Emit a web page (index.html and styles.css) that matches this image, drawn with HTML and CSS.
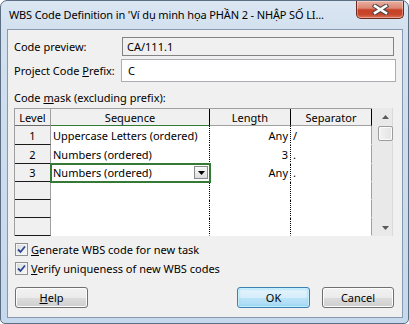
FILE: index.html
```html
<!DOCTYPE html>
<html>
<head>
<meta charset="utf-8">
<link rel="stylesheet" href="styles.css">
</head>
<body>
<div class="window">
  <div class="titlebar">
    <span class="title">WBS Code Definition in 'Ví dụ minh họa PHẦN 2 - NHẬP SỐ LI...</span>
    <div class="close">
      <svg width="17" height="11" viewBox="0 0 17 11">
        <path d="M3 2 L14 9 M14 2 L3 9" stroke="#474747" stroke-width="4.6" stroke-linecap="square" fill="none"/>
        <path d="M3 2 L14 9 M14 2 L3 9" stroke="#ffffff" stroke-width="2.6" stroke-linecap="square" fill="none"/>
      </svg>
    </div>
  </div>
  <div class="client">
    <div class="field-row preview-row">
      <span class="label lbl-preview">Code preview:</span>
      <div class="box readonly">CA/111.1</div>
    </div>
    <div class="field-row prefix-row">
      <span class="label lbl-prefix">Project Code <u>P</u>refix:</span>
      <div class="box input">C</div>
    </div>
    <div class="mask-label">Code <u>m</u>ask (excluding prefix):</div>
    <div class="grid">
      <div class="table">
        <div class="hc level-h">Level</div>
        <div class="hc seq-h">Sequence</div>
        <div class="hc len-h">Length</div>
        <div class="hc sep-h">Separator</div>

        <div class="lv">1</div>
        <div class="c seq">Uppercase Letters (ordered)</div>
        <div class="c len">Any</div>
        <div class="c sep">/</div>

        <div class="lv">2</div>
        <div class="c seq">Numbers (ordered)</div>
        <div class="c len">3</div>
        <div class="c sep">.</div>

        <div class="lv">3</div>
        <div class="c seq active"><span>Numbers (ordered)</span><span class="dd"><svg width="7" height="4" viewBox="0 0 7 4"><path d="M0 0 H7 L3.5 4 Z" fill="#000"/></svg></span></div>
        <div class="c len">Any</div>
        <div class="c sep">.</div>

        <div class="lv"></div>
        <div class="c seq"></div>
        <div class="c len"></div>
        <div class="c sep"></div>

        <div class="lv"></div>
        <div class="c seq"></div>
        <div class="c len"></div>
        <div class="c sep"></div>

        <div class="lv"></div>
        <div class="c seq"></div>
        <div class="c len"></div>
        <div class="c sep"></div>
      </div>
      <div class="scrollbar">
        <div class="sb-btn"><svg width="7" height="4" viewBox="0 0 7 4"><path d="M0 4 H7 L3.5 0 Z" fill="#5a5a5a"/></svg></div>
        <div class="sb-thumb"></div>
        <div class="sb-track"></div>
        <div class="sb-btn"><svg width="7" height="4" viewBox="0 0 7 4"><path d="M0 0 H7 L3.5 4 Z" fill="#5a5a5a"/></svg></div>
      </div>
    </div>
    <div class="checks">
      <div class="check-row">
        <span class="cb"><svg width="9" height="9" viewBox="0 0 9 9"><path d="M1 4.5 L3.5 7 L8 1.5" stroke="#2b4691" stroke-width="1.8" fill="none"/></svg></span>
        <span class="ctext"><u>G</u>enerate WBS code for new task</span>
      </div>
      <div class="check-row">
        <span class="cb"><svg width="9" height="9" viewBox="0 0 9 9"><path d="M1 4.5 L3.5 7 L8 1.5" stroke="#2b4691" stroke-width="1.8" fill="none"/></svg></span>
        <span class="ctext"><u>V</u>erify uniqueness of new WBS codes</span>
      </div>
    </div>
    <div class="buttons">
      <div class="btn help"><u>H</u>elp</div>
      <div class="btn ok">OK</div>
      <div class="btn cancel">Cancel</div>
    </div>
  </div>
</div>
</body>
</html>
```

FILE: styles.css
```css
* { box-sizing: border-box; }
html, body { margin: 0; padding: 0; background: #ffffff; }
body {
  font-family: "Noto Sans", "Open Sans", sans-serif;
  font-size: 11px;
  color: #000;
}
u { text-decoration: underline; text-underline-offset: 1px; }

.window {
  width: 409px;
  height: 324px;
  border: 1px solid #5c6e84;
  border-radius: 7px 7px 5px 5px;
  background: linear-gradient(180deg, #dbe6f2 0px, #d2e0ef 30px, #c6d8ec 100%);
  padding: 0 5px 5px 6px;
  display: flex;
  flex-direction: column;
}

.titlebar {
  height: 28px;
  display: flex;
  justify-content: space-between;
  align-items: flex-start;
}
.title {
  padding-left: 2px;
  margin-top: 6px;
  line-height: 16px;
  white-space: nowrap;
  letter-spacing: -0.13px;
}
.close {
  width: 48px;
  height: 18px;
  margin-right: -1px;
  border: 1px solid #6b2a20;
  border-top: none;
  border-radius: 0 0 5px 5px;
  background: linear-gradient(180deg, #e8b0a2 0%, #dc8672 42%, #c84128 52%, #c7442b 78%, #dc7456 100%);
  box-shadow: inset 0 0 0 1px rgba(255,255,255,0.35);
  display: flex;
  align-items: center;
  justify-content: center;
}

.client {
  flex: 1;
  border: 1px solid #8799ae;
  background: #f0f0f0;
  padding: 7px 6px 0 6px;
  display: flex;
  flex-direction: column;
}

.field-row { display: flex; align-items: center; }
.preview-row { height: 19px; }
.prefix-row { height: 23px; margin-top: 3px; }
.lbl-preview { width: 108px; }
.lbl-prefix { width: 107px; }
.box {
  height: 100%;
  display: flex;
  align-items: center;
}
.readonly {
  width: 272px;
  border: 1px solid #838383;
  background: #f0f0f0;
  padding-left: 4px;
}
.input {
  width: 275px;
  border: 1px solid #abadb3;
  background: #ffffff;
  padding-left: 6px;
}

.mask-label {
  margin-top: 8px;
  line-height: 16px;
  height: 16px;
}

.grid {
  margin-top: 2px;
  width: 379px;
  height: 128px;
  display: flex;
}
.table {
  border-top: 1px solid #a0a0a0;
  border-left: 1px solid #a0a0a0;
  display: grid;
  grid-template-columns: 36px 159px 81px 81px;
  grid-template-rows: 17px 19px 19px 18px 18px 18px 18px;
}
.hc {
  background: #f0f0f0;
  border-bottom: 1px solid #a0a0a0;
  border-right: 1px solid #000;
  display: flex;
  align-items: center;
  justify-content: center;
}
.level-h { border-right: 1px solid #a0a0a0; border-bottom-color: #6a6a6a; }
.seq-h { border-bottom: 1px solid #2e7d32; }
.sep-h { border-right-color: #000; }

.lv {
  background: #f0f0f0;
  border-bottom: 1px solid #1a1a1a;
  border-right: 1px solid #a0a0a0;
  display: flex;
  align-items: center;
  justify-content: center;
}
.c {
  background: #ffffff;
  border-bottom: 1px solid #ffffff;
  display: flex;
  align-items: center;
  white-space: nowrap;
}
.seq { border-right: 1px dotted #000; padding-left: 2px; }
.len { border-right: 1px dotted #000; justify-content: flex-end; padding-right: 2px; }
.sep { border-right: 1px solid #a0a0a0; padding-left: 2px; }

.active {
  position: relative;
  z-index: 1;
  outline: 2px solid #347a34;
  outline-offset: -1px;
  padding-right: 1px;
}
.dd {
  margin-left: auto;
  width: 14px;
  height: 13px;
  border: 1px solid #8a8a8a;
  background: linear-gradient(180deg, #fafafa, #dcdcdc);
  display: flex;
  align-items: flex-end;
  justify-content: center;
  padding-bottom: 3px;
}
.dd svg { display: block; }

.scrollbar {
  width: 21px;
  height: 128px;
  background: #e9e9e9;
  border-right: 1px solid #dadada;
  padding-left: 6px;
  padding-right: 0;
  display: flex;
  flex-direction: column;
}
.sb-btn {
  height: 17px;
  width: 15px;
  display: flex;
  align-items: center;
  justify-content: center;
}
.sb-btn svg { display: block; }
.sb-thumb {
  margin-top: 1px;
  width: 15px;
  height: 15px;
  border: 1px solid #9c9c9c;
  border-radius: 2px;
  background: linear-gradient(90deg, #f3f3f3, #e3e3e3);
  box-shadow: inset 0 0 0 1px #fbfbfb;
}
.sb-track { flex: 1; }

.checks {
  margin-top: 4px;
  display: flex;
  flex-direction: column;
}
.check-row {
  height: 19px;
  display: flex;
  align-items: center;
}
.cb {
  margin-left: 1px;
  width: 13px;
  height: 13px;
  border: 1px solid #8e8f8f;
  background: linear-gradient(135deg, #d6d9dc, #fbfbfb);
  box-shadow: inset 0 0 0 1px #f4f4f4;
  display: flex;
  align-items: center;
  justify-content: center;
}
.cb svg { display: block; }
.ctext { margin-left: 3px; }

.buttons {
  margin-top: 9px;
  display: flex;
  align-items: center;
  padding-left: 1px;
  padding-right: 2px;
}
.btn {
  width: 73px;
  height: 21px;
  border: 1px solid #707070;
  border-radius: 3px;
  background: linear-gradient(180deg, #f2f2f2 0%, #ebebeb 50%, #dddddd 51%, #cfcfcf 100%);
  box-shadow: inset 0 0 0 1px #fcfcfc;
  display: flex;
  align-items: center;
  justify-content: center;
}
.ok {
  margin-left: auto;
  border-color: #3c7fb1;
  background: linear-gradient(180deg, #e5f4fc 0%, #d5eefb 50%, #bde4f9 51%, #a8d9f4 100%);
  box-shadow: inset 0 0 0 1px #c5effd, inset 0 0 2px 1px #7fd0f5;
}
.cancel { width: 72px; margin-left: 12px; }
```
